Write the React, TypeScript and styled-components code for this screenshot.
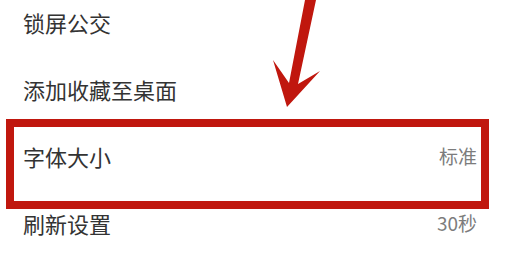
import * as React from 'react';
import styled, { createGlobalStyle } from 'styled-components';

const GlobalStyle = createGlobalStyle`
  html, body {
    margin: 0;
    padding: 0;
    background: #fff;
  }
  body {
    font-family: "Noto Sans CJK SC", "Noto Sans", sans-serif;
  }
`;

const Screen = styled.div`
  position: relative;
  width: 513px;
  height: 253px;
  overflow: hidden;
  background: #fff;
`;

const List = styled.div`
  display: flex;
  flex-direction: column;
  margin-top: -12px;
`;

const Row = styled.div`
  display: flex;
  align-items: center;
  justify-content: space-between;
  height: 67px;
  padding: 0 36px 0 23px;
`;

const Label = styled.span`
  font-size: 22px;
  line-height: 1;
  color: #333;
`;

const Value = styled.span`
  font-size: 19px;
  line-height: 1;
  color: #7c7c7c;
`;

// annotation drawn over the screenshot
const Highlight = styled.div`
  position: absolute;
  left: 6px;
  top: 119px;
  width: 483px;
  height: 90px;
  box-sizing: border-box;
  border: 8px solid #c0170e;
`;

const Arrow = styled.svg`
  position: absolute;
  left: 0;
  top: 0;
`;

const items = [
  { label: '锁屏公交' },
  { label: '添加收藏至桌面' },
  { label: '字体大小', value: '标准' },
  { label: '刷新设置', value: '30秒' },
];

const App = () => {
  return (
    <Screen>
      <GlobalStyle />
      <List>
        {items.map((item) => (
          <Row key={item.label}>
            <Label>{item.label}</Label>
            {item.value && <Value>{item.value}</Value>}
          </Row>
        ))}
      </List>
      <Highlight />
      <Arrow width="513" height="253" viewBox="0 0 513 253">
        <polygon
          points="305,0 316,0 298,84 320,71 287,107 273,60 289,83"
          fill="#c0170e"
        />
      </Arrow>
    </Screen>
  );
};

export default App;
